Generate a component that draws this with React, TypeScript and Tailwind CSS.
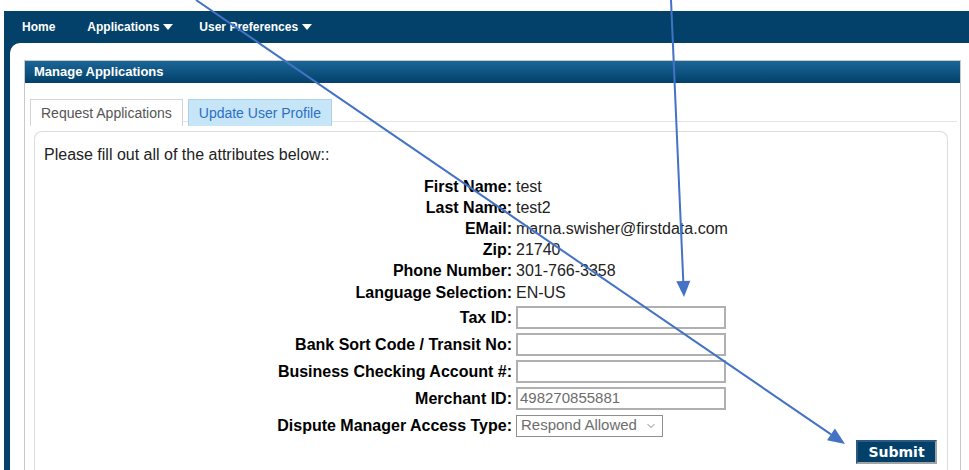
import { ChevronDown } from "lucide-react";

type Field = { label: string; value?: string };

const readOnlyFields: Field[] = [
  { label: "First Name:", value: "test" },
  { label: "Last Name:", value: "test2" },
  { label: "EMail:", value: "marna.swisher@firstdata.com" },
  { label: "Zip:", value: "21740" },
  { label: "Phone Number:", value: "301-766-3358" },
  { label: "Language Selection:", value: "EN-US" },
];

const inputFields: Field[] = [
  { label: "Tax ID:" },
  { label: "Bank Sort Code / Transit No:" },
  { label: "Business Checking Account #:" },
  { label: "Merchant ID:", value: "498270855881" },
];

function Caret() {
  return (
    <svg width="10" height="6" viewBox="0 0 10 6" className="ml-[4px]">
      <path d="M0 0 L10 0 L5 6 Z" fill="white" />
    </svg>
  );
}

function NavBar() {
  return (
    <nav className="h-[32px] flex items-center pl-[18px] text-[12px] font-bold text-white">
      <span>Home</span>
      <span className="ml-[32px] flex items-center">
        Applications
        <Caret />
      </span>
      <span className="ml-[26px] flex items-center">
        User Preferences
        <Caret />
      </span>
    </nav>
  );
}

function Tabs() {
  return (
    <div className="flex items-start h-[23px] border-b border-[#e3e3e3] ml-[5px] mr-[3px] gap-[5px] text-[14px]">
      <div className="h-[27px] px-[10px] flex items-center bg-white border border-[#d4d4d4] border-b-0 text-[#555]">
        Request Applications
      </div>
      <div className="h-[27px] px-[10px] flex items-center bg-[#c6e6f7] border border-[#acd3ea] border-b-0 text-[#2e6fc4]">
        Update User Profile
      </div>
    </div>
  );
}

function FormRows() {
  return (
    <div className="flex flex-col text-[16px]">
      {readOnlyFields.map((f) => (
        <div key={f.label} className="h-[21.2px] flex items-center">
          <span className="w-[477px] text-right font-bold text-black">{f.label}</span>
          <span className="ml-[4px] text-[#222]">{f.value}</span>
        </div>
      ))}
      <div className="h-[1px]" />
      {inputFields.map((f) => (
        <div key={f.label} className="h-[27px] flex items-center">
          <span className="w-[477px] text-right font-bold text-black">{f.label}</span>
          <div className="ml-[4px] w-[210px] h-[23px] border-2 border-[#b0b0b0] flex items-center px-[2px] text-[15px] text-[#6d6d6d]">
            {f.value}
          </div>
        </div>
      ))}
      <div className="h-[27px] flex items-center">
        <span className="w-[477px] text-right font-bold text-black">Dispute Manager Access Type:</span>
        <div className="ml-[4px] w-[147px] h-[22px] border border-[#8f8f8f] flex items-center justify-between pl-[4px] pr-[5px] text-[15px] text-[#6d6d6d]">
          Respond Allowed
          <ChevronDown size={12} strokeWidth={1.5} className="text-[#555]" />
        </div>
      </div>
      <div className="flex justify-end mr-[10px] mt-[1px]">
        <button className="w-[81px] h-[24px] bg-[#03416a] border-2 border-t-[#2b5a7e] border-l-[#2b5a7e] border-r-[#a3a3a3] border-b-[#a3a3a3] text-white font-bold text-[14px] font-['DejaVu_Sans',Verdana,sans-serif]">
          Submit
        </button>
      </div>
    </div>
  );
}

function Arrows() {
  return (
    <svg className="absolute inset-0 pointer-events-none" width="969" height="470">
      <line x1="196" y1="0" x2="831" y2="434.4" stroke="#4472c4" strokeWidth="2" />
      <polygon points="845,444 827,440.2 834.9,428.6" fill="#4472c4" />
      <line x1="671" y1="0" x2="683.3" y2="282" stroke="#4472c4" strokeWidth="2" />
      <polygon points="684,297 676.3,281.3 690.3,280.7" fill="#4472c4" />
    </svg>
  );
}

export default function App() {
  return (
    <div className="relative w-[969px] h-[470px] overflow-hidden bg-white font-['Liberation_Sans',Arial,sans-serif]">
      <div className="h-[11px]" />
      <div className="ml-[4px] h-[459px] bg-[#03416a] flex flex-col">
        <NavBar />
        <div className="flex-1 ml-[6px] bg-white rounded-tl-[10px] pt-[17px] pl-[14px] pr-[8px]">
          <div className="h-full border border-[#c9c9c9] border-b-0 flex flex-col">
            <div className="h-[22px] bg-gradient-to-b from-[#1b6698] to-[#03416a] flex items-center pl-[9px] text-[13px] font-bold text-white">
              Manage Applications
            </div>
            <div className="pt-[16px] flex-1 flex flex-col">
              <Tabs />
              <div className="flex-1 mt-[9px] ml-[9px] mr-[12px] border border-[#dcdcdc] rounded-t-[8px] border-b-0">
                <div className="h-[21px] mt-[12px] mb-[11px] pl-[9px] text-[16px] text-[#222] flex items-center">
                  Please fill out all of the attributes below::
                </div>
                <FormRows />
              </div>
            </div>
          </div>
        </div>
      </div>
      <Arrows />
    </div>
  );
}
